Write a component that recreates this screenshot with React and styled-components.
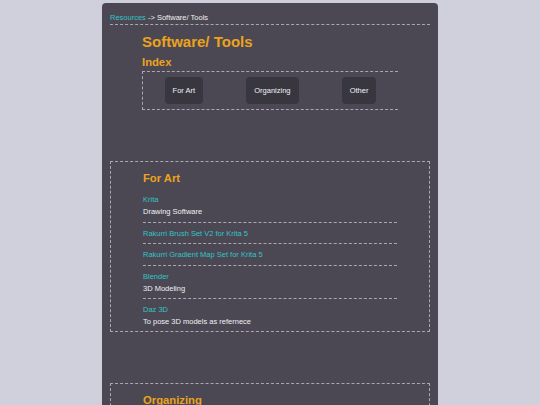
import React from "react";
import styled, { createGlobalStyle } from "styled-components";

const GlobalStyle = createGlobalStyle`
  html, body {
    margin: 0;
    padding: 0;
    background: #d0cfdc;
    font-family: "Liberation Sans", Arial, sans-serif;
    font-size: 7.5px;
    color: #f0f0f2;
  }
`;

const Page = styled.div`
  width: 336px;
  margin: 3px auto 0;
  background: #4b4854;
  border-radius: 4px;
  padding: 10px 8px 60px;
  box-sizing: border-box;
`;

const Crumbs = styled.div`
  padding-bottom: 2px;
  border-bottom: 1px dashed #a9a8b2;
  line-height: 9px;
`;

const Link = styled.a`
  color: #33c3c6;
  text-decoration: none;
  display: ${(p) => (p.$block ? "block" : "inline")};
  line-height: ${(p) => (p.$block ? "12px" : "inherit")};
`;

const Head = styled.div`
  margin: 0 32px;
`;

const Title = styled.h1`
  margin: 8px 0 0;
  font-size: 15px;
  line-height: 17px;
  color: #eba31d;
`;

const SubTitle = styled.h2`
  margin: ${(p) => p.$margin || "6px 0 2px"};
  font-size: 11.25px;
  line-height: 13px;
  color: #eba31d;
`;

const IndexBox = styled.div`
  display: flex;
  justify-content: space-around;
  align-items: center;
  padding: 5px 0;
  border: 1px dashed #a9a8b2;
  border-right: none;
`;

const Button = styled.button`
  background: #38363f;
  color: #f2f2f4;
  border: none;
  border-radius: 4px;
  padding: 9px 8px;
  font-family: inherit;
  font-size: 7.5px;
  line-height: 9px;
  cursor: pointer;
`;

const Section = styled.section`
  margin-top: 51px;
  border: 1px dashed #a9a8b2;
  padding: 10px 32px 0;
`;

const Item = styled.div`
  padding: ${(p) => (p.$last ? "5px 0 2.5px" : "5px 0 3.5px")};
  border-bottom: ${(p) => (p.$last ? "none" : "1px dashed #a9a8b2")};
`;

const Desc = styled.div`
  line-height: 12px;
`;

const sections = [
  {
    name: "For Art",
    items: [
      { title: "Krita", desc: "Drawing Software" },
      { title: "Rakurri Brush Set V2 for Krita 5" },
      { title: "Rakurri Gradient Map Set for Krita 5" },
      { title: "Blender", desc: "3D Modeling" },
      { title: "Daz 3D", desc: "To pose 3D models as refernece" },
    ],
  },
  {
    name: "Organizing",
    items: [
      { title: "Notion", desc: "Notes and planning" },
      { title: "Trello", desc: "Task boards" },
    ],
  },
  {
    name: "Other",
    items: [{ title: "OBS Studio", desc: "Recording" }],
  },
];

export default function App() {
  return (
    <>
      <GlobalStyle />
      <Page>
        <Crumbs>
          <Link href="#">Resources</Link> -&gt; Software/ Tools
        </Crumbs>
        <Head>
          <Title>Software/ Tools</Title>
          <SubTitle>Index</SubTitle>
          <IndexBox>
            {sections.map((s) => (
              <Button key={s.name}>{s.name}</Button>
            ))}
          </IndexBox>
        </Head>
        {sections.map((s) => (
          <Section key={s.name}>
            <SubTitle $margin="0 0 4px">{s.name}</SubTitle>
            {s.items.map((it, i) => (
              <Item key={it.title} $last={i === s.items.length - 1}>
                <Link $block href="#">{it.title}</Link>
                {it.desc && <Desc>{it.desc}</Desc>}
              </Item>
            ))}
          </Section>
        ))}
      </Page>
    </>
  );
}
